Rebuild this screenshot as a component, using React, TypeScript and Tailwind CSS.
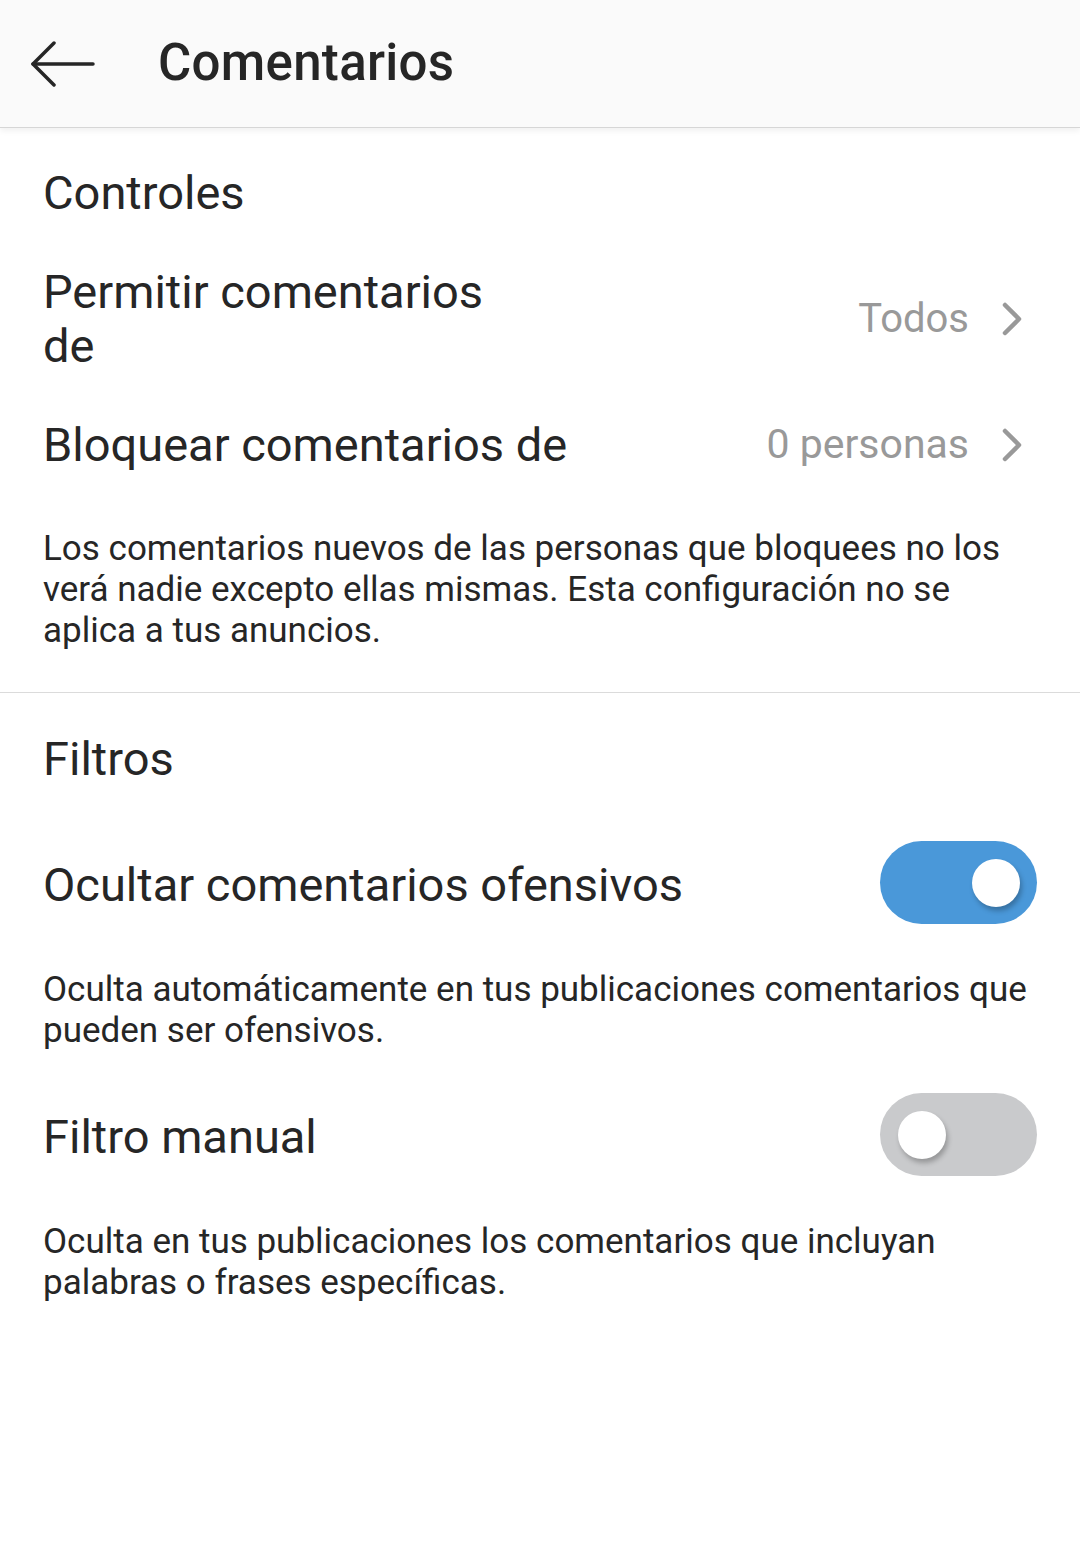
import React, { useState } from 'react';

// Back arrow drawn to match the thin Android-style arrow
const BackArrow = () => (
  <svg width="66" height="48" viewBox="0 0 66 48" fill="none" stroke="#262626" strokeWidth="3.5" strokeLinecap="round" strokeLinejoin="round">
    <path d="M63 23H3" />
    <path d="M24 2L3 23l21 21" />
  </svg>
);

const Chevron = () => (
  <svg width="22" height="34" viewBox="0 0 22 34" fill="none" stroke="#999999" strokeWidth="4.5" strokeLinecap="round" strokeLinejoin="round">
    <path d="M4 3l14 14L4 31" />
  </svg>
);

const Toggle = ({ on, onClick }: { on: boolean; onClick: () => void }) => (
  <button
    onClick={onClick}
    className={`relative w-[157px] h-[83px] mb-[6px] rounded-full shrink-0 ${on ? 'bg-[#4a98d9]' : 'bg-[#c9cacc]'}`}
  >
    <span
      className={`absolute top-[18px] w-[48px] h-[48px] rounded-full bg-white shadow-[2px_4px_5px_rgba(0,0,0,0.25)] ${on ? 'left-[92px]' : 'left-[18px]'}`}
    />
  </button>
);

export default function App() {
  const [hideOffensive, setHideOffensive] = useState(true);
  const [manualFilter, setManualFilter] = useState(false);

  return (
    <div className="min-h-screen bg-white text-[#262626]" style={{ fontFamily: 'Roboto, "Noto Sans", sans-serif' }}>
      {/* Header */}
      <header className="h-[128px] bg-[#fafafa] flex items-center border-b border-[#d6d6d6] shadow-[0_3px_6px_rgba(0,0,0,0.06)]">
        <div className="pl-[30px] pt-[2px]">
          <BackArrow />
        </div>
        <h1 className="ml-[62px] text-[51px] font-medium tracking-[0.3px]">Comentarios</h1>
      </header>

      {/* Controles */}
      <section className="px-[43px]">
        <h2 className="pt-[36px] text-[47px] leading-[58px]">Controles</h2>

        <div className="mt-[43px] flex items-center justify-between">
          <div className="w-[490px] text-[47px] leading-[54px]">Permitir comentarios de</div>
          <div className="flex items-center gap-[32px] pr-[14px]">
            <span className="text-[40px] text-[#999999]">Todos</span>
            <Chevron />
          </div>
        </div>

        <div className="mt-[41px] flex items-center justify-between">
          <div className="text-[47px] leading-[54px]">Bloquear comentarios de</div>
          <div className="flex items-center gap-[32px] pr-[14px]">
            <span className="text-[41px] text-[#999999]">0 personas</span>
            <Chevron />
          </div>
        </div>

        <p className="mt-[52px] text-[35px] leading-[41px] text-[#262626]">
          Los comentarios nuevos de las personas que bloquees no los verá nadie excepto ellas mismas. Esta configuración no se aplica a tus anuncios.
        </p>
      </section>

      <div className="mt-[41px] h-px bg-[#dbdbdb]" />

      {/* Filtros */}
      <section className="px-[43px]">
        <h2 className="pt-[37px] text-[47px] leading-[58px]">Filtros</h2>

        <div className="mt-[53px] flex items-center justify-between">
          <div className="text-[47px] leading-[54px]">Ocultar comentarios ofensivos</div>
          <Toggle on={hideOffensive} onClick={() => setHideOffensive(!hideOffensive)} />
        </div>

        <p className="mt-[39px] text-[35px] leading-[41px]">
          Oculta automáticamente en tus publicaciones comentarios que pueden ser ofensivos.
        </p>

        <div className="mt-[42px] flex items-center justify-between">
          <div className="text-[47px] leading-[54px]">Filtro manual</div>
          <Toggle on={manualFilter} onClick={() => setManualFilter(!manualFilter)} />
        </div>

        <p className="mt-[39px] pr-[60px] text-[35px] leading-[41px]">
          Oculta en tus publicaciones los comentarios que incluyan palabras o frases específicas.
        </p>
      </section>
    </div>
  );
}
